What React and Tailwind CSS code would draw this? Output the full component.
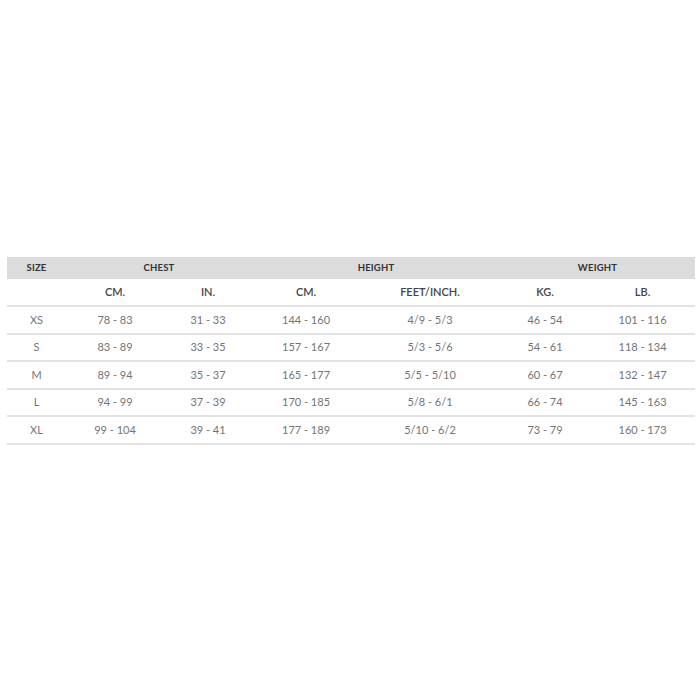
import React from 'react';

const rows = [
    ['XS', '78 - 83', '31 - 33', '144 - 160', '4/9 - 5/3', '46 - 54', '101 - 116'],
    ['S', '83 - 89', '33 - 35', '157 - 167', '5/3 - 5/6', '54 - 61', '118 - 134'],
    ['M', '89 - 94', '35 - 37', '165 - 177', '5/5 - 5/10', '60 - 67', '132 - 147'],
    ['L', '94 - 99', '37 - 39', '170 - 185', '5/8 - 6/1', '66 - 74', '145 - 163'],
    ['XL', '99 - 104', '39 - 41', '177 - 189', '5/10 - 6/2', '73 - 79', '160 - 173'],
];

const units = ['', 'CM.', 'IN.', 'CM.', 'FEET/INCH.', 'KG.', 'LB.'];
const widths = ['w-[59px]', 'w-[98px]', 'w-[88px]', 'w-[108px]', 'w-[140px]', 'w-[90px]', 'w-[105px]'];

const App = () => {
    return (
        <div className="h-[700px] bg-white flex items-center pt-[2px]" style={{ fontFamily: 'Lato, "Open Sans", sans-serif' }}>
            <table className="ml-[7px] w-[688px] table-fixed border-collapse text-center">
                <colgroup>
                    {widths.map((w, i) => <col key={i} className={w} />)}
                </colgroup>
                <thead>
                    {/* group headers */}
                    <tr className="bg-[#dcdcdc] h-[22px] text-[9.5px] font-bold text-[#333] tracking-[0.2px]">
                        <th>SIZE</th>
                        <th colSpan={2}>CHEST</th>
                        <th colSpan={2}>HEIGHT</th>
                        <th colSpan={2}>WEIGHT</th>
                    </tr>
                    <tr className="h-[27px] border-b-2 border-[#e3e3e3] text-[11px] text-[#444]">
                        {units.map((u, i) => <th key={i} className="font-semibold">{u}</th>)}
                    </tr>
                </thead>
                <tbody className="text-[11px] text-[#747474]">
                    {rows.map((row) => (
                        <tr key={row[0]} className="h-[27.5px] border-b-2 border-[#e3e3e3]">
                            {row.map((cell, i) => <td key={i}>{cell}</td>)}
                        </tr>
                    ))}
                </tbody>
            </table>
        </div>
    );
};

export default App;
